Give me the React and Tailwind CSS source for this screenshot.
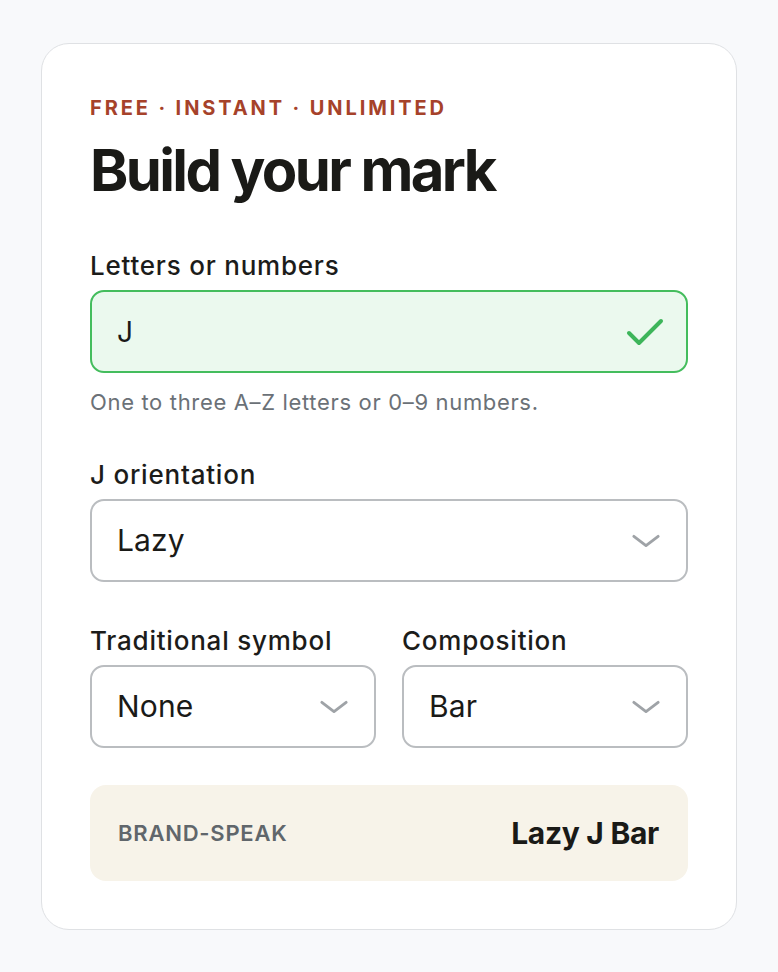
const Chevron = ({ className }) => (
	<svg
		viewBox="0 0 30 14"
		className={className}
		fill="none"
		stroke="currentColor"
		strokeWidth="3"
		strokeLinecap="round"
		strokeLinejoin="round"
	>
		<path d="M2 2l13 10L28 2" />
	</svg>
);

const SelectBox = ({ value }) => (
	<div className="h-[83px] flex items-center justify-between border-2 border-[#babdc0] rounded-[14px] bg-white pl-[25px] pr-[26px]">
		<span className="text-[30px] tracking-[0.005em] text-[#1a1a17]">{value}</span>
		<Chevron className="w-[28px] h-[14px] text-[#9fa3a7]" />
	</div>
);

const Label = ({ children }) => (
	<label className="block text-[26px] leading-[32px] font-medium tracking-[0.03em] text-[#1c1c1a] mb-2">
		{children}
	</label>
);

const App = () => {
	return (
		<div
			className="min-h-screen bg-[#f8f9fb] pt-[43px] pb-[43px]"
			style={{ fontFamily: "Inter, 'Noto Sans', sans-serif" }}
		>
			<div className="mx-auto w-[696px] bg-white border border-[#dfe1e4] rounded-[28px] px-[48px] pt-[51px] pb-[48px]">
				<p className="text-[20px] leading-[26px] font-bold tracking-[0.145em] text-[#a6422a]">
					FREE · INSTANT · UNLIMITED
				</p>
				<h2 className="mt-4 text-[58px] leading-[66px] font-bold tracking-[-0.045em] text-[#1a1a17]">
					Build your mark
				</h2>

				<div className="mt-[47px]">
					<Label>Letters or numbers</Label>
					<div className="h-[83px] flex items-center justify-between border-2 border-[#44bd5d] rounded-[14px] bg-[#ebf9ee] pl-[25px] pr-[22px]">
						<span className="text-[28px] text-[#1a1a17]">J</span>
						<svg
							viewBox="0 0 38 28"
							className="w-[38px] h-[28px] text-[#3db55a]"
							fill="none"
							stroke="currentColor"
							strokeWidth="4"
							strokeLinecap="round"
							strokeLinejoin="round"
						>
							<path d="M3 15l10 10L35 3" />
						</svg>
					</div>
					<p className="mt-[15px] text-[22px] leading-[28px] tracking-[0.03em] text-[#6b7177]">
						One to three A–Z letters or 0–9 numbers.
					</p>
				</div>

				<div className="mt-[43px]">
					<Label>J orientation</Label>
					<SelectBox value="Lazy" />
				</div>

				<div className="mt-[43px] grid grid-cols-2 gap-[26px]">
					<div>
						<Label>Traditional symbol</Label>
						<SelectBox value="None" />
					</div>
					<div>
						<Label>Composition</Label>
						<SelectBox value="Bar" />
					</div>
				</div>

				<div className="mt-[37px] h-[96px] flex items-center justify-between bg-[#f7f3e9] rounded-[16px] pl-[28px] pr-[29px]">
					<span className="text-[22px] font-semibold tracking-[0.035em] text-[#60666b]">
						BRAND-SPEAK
					</span>
					<span className="text-[30px] font-bold tracking-[-0.01em] text-[#1a1a17]">
						Lazy J Bar
					</span>
				</div>
			</div>
		</div>
	);
};

export default App;
